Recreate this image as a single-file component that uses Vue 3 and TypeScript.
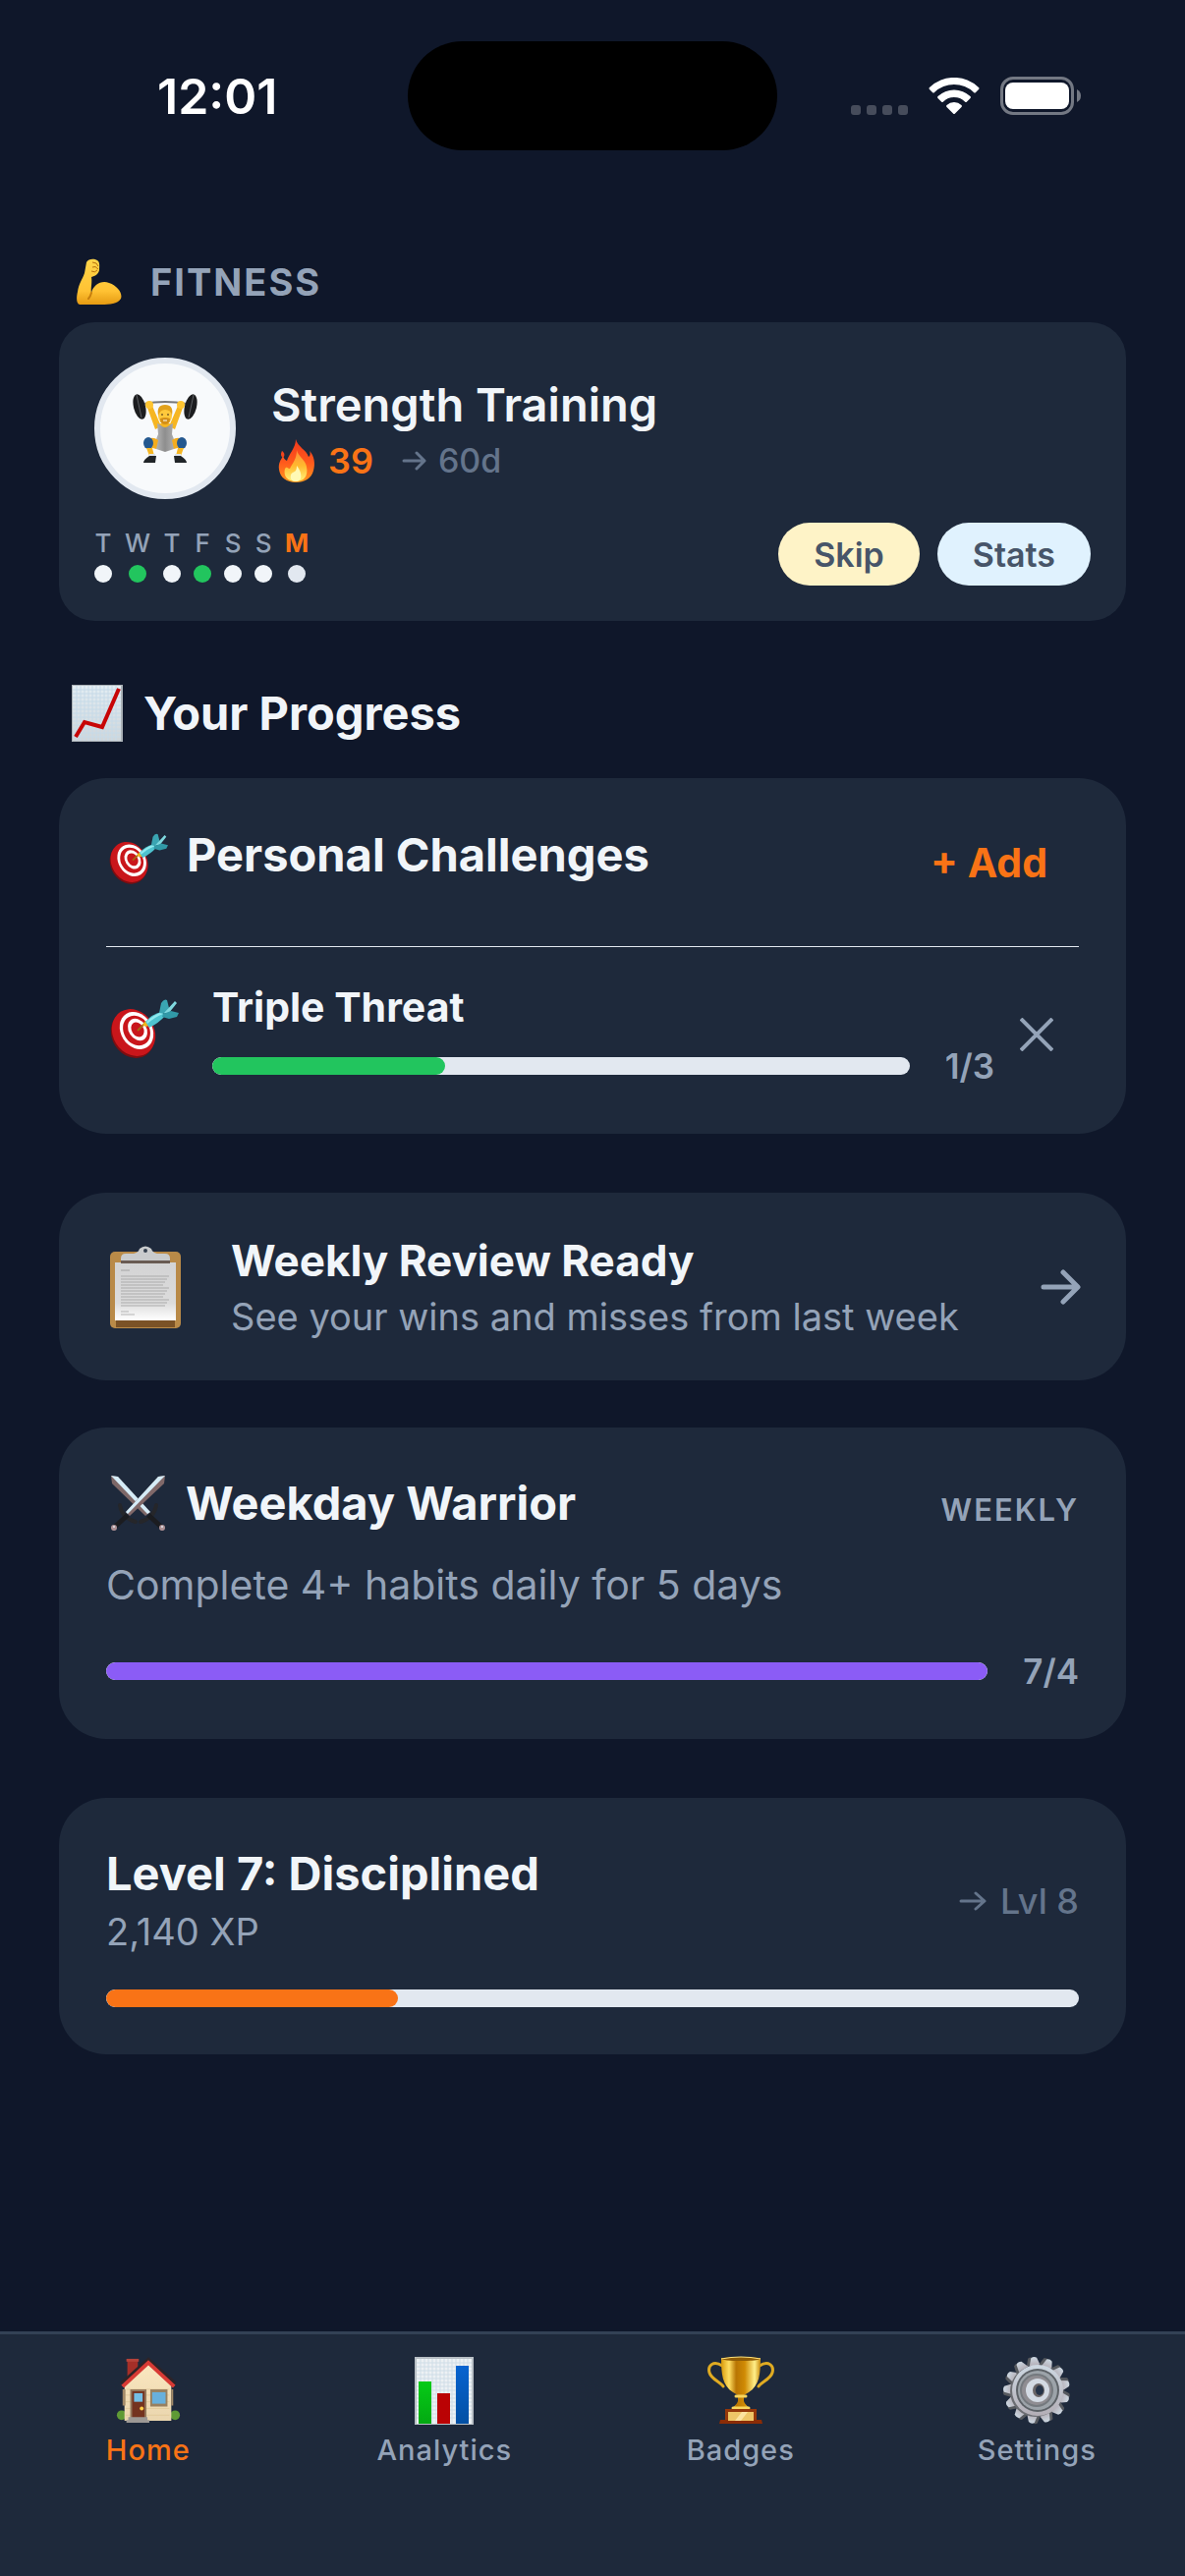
<script setup lang="ts">
interface Day {
  label: string
  tone: 'idle' | 'done' | 'today'
}

interface Tab {
  label: string
  icon: string
  active: boolean
}

const days: Day[] = [
  { label: 'T', tone: 'idle' },
  { label: 'W', tone: 'done' },
  { label: 'T', tone: 'idle' },
  { label: 'F', tone: 'done' },
  { label: 'S', tone: 'idle' },
  { label: 'S', tone: 'idle' },
  { label: 'M', tone: 'today' },
]

const tabs: Tab[] = [
  { label: 'Home', icon: 'house', active: true },
  { label: 'Analytics', icon: 'bars', active: false },
  { label: 'Badges', icon: 'trophy', active: false },
  { label: 'Settings', icon: 'gear', active: false },
]

const challenge = { title: 'Triple Threat', done: 1, goal: 3 }
const weekly = { done: 7, goal: 4 }
const levelPercent = 30

function percent(done: number, goal: number): number {
  return Math.min(100, (done / goal) * 100)
}

const teeth = Array.from({ length: 13 }, (_, i) => Math.round((i * 360) / 13) - 5)
const letterLines = Array.from({ length: 11 }, (_, i) => 31 + i * 3)
</script>

<template>
  <div class="page">
    <svg class="sprite" aria-hidden="true">
      <defs>
        <linearGradient id="skin" x1="0" y1="0" x2="0" y2="1">
          <stop offset="0" stop-color="#ffd54a" />
          <stop offset="0.7" stop-color="#ffc233" />
          <stop offset="1" stop-color="#e59a12" />
        </linearGradient>
        <linearGradient id="flame" x1="0" y1="0" x2="0" y2="1">
          <stop offset="0" stop-color="#f2381c" />
          <stop offset="0.55" stop-color="#ff5a1c" />
          <stop offset="1" stop-color="#ff9a1e" />
        </linearGradient>
        <linearGradient id="flame-core" x1="0" y1="0" x2="0" y2="1">
          <stop offset="0" stop-color="#ff8c3a" />
          <stop offset="0.5" stop-color="#ffb92e" />
          <stop offset="1" stop-color="#fff27a" />
        </linearGradient>
        <linearGradient id="paper" x1="0" y1="0" x2="0" y2="1">
          <stop offset="0" stop-color="#e3edf3" />
          <stop offset="1" stop-color="#cfd6da" />
        </linearGradient>
        <linearGradient id="sheet" x1="0" y1="0" x2="0" y2="1">
          <stop offset="0" stop-color="#d3d3d4" />
          <stop offset="0.7" stop-color="#dcdcdc" />
          <stop offset="1" stop-color="#ffffff" />
        </linearGradient>
        <linearGradient id="wall" x1="0" y1="0" x2="0" y2="1">
          <stop offset="0" stop-color="#fbe8c0" />
          <stop offset="1" stop-color="#ead5ae" />
        </linearGradient>
        <linearGradient id="gold" x1="0" y1="0" x2="1" y2="0">
          <stop offset="0" stop-color="#d99a0b" />
          <stop offset="0.2" stop-color="#ffdf62" />
          <stop offset="0.38" stop-color="#b87503" />
          <stop offset="0.6" stop-color="#d08b04" />
          <stop offset="0.85" stop-color="#fff08a" />
          <stop offset="1" stop-color="#c98a0a" />
        </linearGradient>
        <linearGradient id="steel" x1="0" y1="0" x2="0" y2="1">
          <stop offset="0" stop-color="#cdd8e2" />
          <stop offset="1" stop-color="#b3aeb6" />
        </linearGradient>
        <linearGradient id="suit" x1="0" y1="0" x2="1" y2="0">
          <stop offset="0" stop-color="#b5b5b5" />
          <stop offset="0.5" stop-color="#8e8e8e" />
          <stop offset="1" stop-color="#b0b0b0" />
        </linearGradient>
        <linearGradient id="green-bar" x1="0" y1="0" x2="0" y2="1">
          <stop offset="0" stop-color="#06cb17" />
          <stop offset="1" stop-color="#03a912" />
        </linearGradient>
        <linearGradient id="blue-bar" x1="0" y1="0" x2="0" y2="1">
          <stop offset="0" stop-color="#0763d0" />
          <stop offset="1" stop-color="#0350a4" />
        </linearGradient>
      </defs>

      <symbol id="target" viewBox="0 0 70 60">
        <ellipse cx="23" cy="36" rx="21" ry="25" transform="rotate(-32 23 36)" fill="#7d0d10" />
        <ellipse cx="24" cy="34" rx="21" ry="25" transform="rotate(-32 24 34)" fill="#c9161b" />
        <ellipse cx="27" cy="32" rx="16" ry="20" transform="rotate(-32 27 32)" fill="#fff" />
        <ellipse cx="27" cy="32" rx="13" ry="16" transform="rotate(-32 27 32)" fill="#c9161b" />
        <ellipse cx="28" cy="31" rx="9" ry="12" transform="rotate(-32 28 31)" fill="#fff" />
        <ellipse cx="28" cy="31" rx="6" ry="8" transform="rotate(-32 28 31)" fill="#c9161b" />
        <path d="M28 32 L36 24" stroke="#a76a12" stroke-width="2" />
        <path d="M33 26 L36 22 L40 27 L36 28 Z" fill="#f0b51d" />
        <path d="M36 23 Q43 15 52 13 L56 17 Q50 24 40 29 Z" fill="#4fc3cf" />
        <path d="M37 23 Q44 16 53 13 L54 15 Q46 18 38 25 Z" fill="#8fe9ee" />
        <path d="M50 14 L52 4 Q55 -1 58 1 L60 9 L56 15 Z" fill="#3aa5b2" />
        <path d="M55 14 L66 2 L68 4 L60 14 Z" fill="#7fd8df" />
        <path d="M54 15 L62 12 L70 14 L68 18 L60 20 L53 18 Z" fill="#3199a7" />
      </symbol>

      <symbol id="house" viewBox="-2 -2 70 72">
        <circle cx="5" cy="60" r="5" fill="#5f9a35" />
        <circle cx="61" cy="60" r="5" fill="#5f9a35" />
        <path d="M11 3 H22 V18 L11 26 Z" fill="#a52f28" />
        <path d="M10 1 H23 V4 H10 Z" fill="#b64239" />
        <path d="M8 27 L33 5 L57 27 V66 H8 Z" fill="url(#wall)" />
        <path d="M10 33 H55 M9 39 H55 M9 46 H55 M9 53 H55 M9 60 H55" stroke="#e3cb9d" stroke-width="1" />
        <path d="M6 33 H9 V50 H6 Z M57 33 H59 V50 H57 Z" fill="#a38a68" />
        <path d="M5 27 L33 2 L61 27" fill="none" stroke="#2e2327" stroke-width="4" />
        <path d="M6 30 L33 5 L60 30" fill="none" stroke="#d83a34" stroke-width="4" />
        <path d="M14 33 H31 V63 H14 Z" fill="#94785c" />
        <path d="M16 35 H29 V63 H16 Z" fill="#74331f" />
        <path d="M18 37 H27 V46 H18 Z" fill="#74bfe5" />
        <circle cx="26" cy="53" r="2" fill="#ffce4a" />
        <path d="M35 33 H53 V51 H35 Z" fill="#98805f" />
        <path d="M37 36 H51 V48 H37 Z" fill="#68b0dc" />
        <path d="M12 62 H32 V65 H34 V68 H10 V65 H12 Z" fill="#9d9995" />
      </symbol>

      <symbol id="bars" viewBox="0 0 66 70">
        <path d="M3 1 H63 V70 H3 Z" fill="#b8bfc5" />
        <path d="M5 3 H61 V69 H5 Z" fill="#edf1f4" />
        <path
          d="M9 3 V69 M13 3 V69 M17 3 V69 M21 3 V69 M25 3 V69 M29 3 V69 M33 3 V69 M37 3 V69 M41 3 V69 M45 3 V69 M49 3 V69 M53 3 V69 M57 3 V69 M5 7 H61 M5 11 H61 M5 15 H61 M5 19 H61 M5 23 H61 M5 27 H61 M5 31 H61 M5 35 H61 M5 39 H61 M5 43 H61 M5 47 H61 M5 51 H61 M5 55 H61 M5 59 H61 M5 63 H61"
          stroke="#cfdde7"
          stroke-width="1"
        />
        <path d="M7 26 H20 V69 H7 Z" fill="url(#green-bar)" />
        <path d="M26 38 H39 V69 H26 Z" fill="#ba0204" />
        <path d="M45 10 H58 V69 H45 Z" fill="url(#blue-bar)" />
      </symbol>

      <symbol id="trophy" viewBox="0 0 68 70">
        <path
          d="M15 10 C6 4 0 10 2 17 C4 24 13 26 16 31 M53 10 C62 4 68 10 66 17 C64 24 55 26 52 31"
          fill="none"
          stroke="#e0ab22"
          stroke-width="3"
          stroke-linecap="round"
        />
        <path d="M14 2 H54 C54 18 53 30 42 37 L37 40 V46 C38 50 42 51 43 55 H25 C26 51 30 50 31 46 V40 L26 37 C15 30 14 18 14 2 Z" fill="url(#gold)" />
        <path d="M29 41 H39 M26 53 H42" stroke="#f8d65c" stroke-width="3" stroke-linecap="round" />
        <ellipse cx="34" cy="3" rx="20" ry="2" fill="#8f5c05" />
        <path d="M14 3 Q34 -1 54 3" fill="none" stroke="#ffe37c" stroke-width="1" />
        <path d="M18 54 H50 V65 H18 Z" fill="#96380a" />
        <path d="M13 65 H55 L56 69 H12 Z" fill="#8b2c06" />
        <path d="M21 57 H47 V66 H21 Z" fill="#eec667" />
        <path d="M28 66 L35 57 H41 L34 66 Z" fill="#fbe3a0" />
      </symbol>

      <symbol id="gear" viewBox="0 0 70 70">
        <g v-for="angle in teeth" :key="angle" :transform="`rotate(${angle} 35 35)`">
          <path d="M29 9 L31 1 Q34 -1 36 1 L39 9 Z" fill="#575a5f" transform="translate(-2 1)" />
          <path d="M30 10 L32 2 Q35 0 38 2 L41 10 Z" fill="url(#steel)" />
        </g>
        <circle cx="34" cy="36" r="26" fill="#6b6d72" />
        <circle cx="36" cy="35" r="26" fill="url(#steel)" />
        <circle cx="36" cy="35" r="22" fill="#5d6267" />
        <circle cx="36" cy="35" r="20" fill="#9ca3a9" />
        <circle cx="35" cy="35" r="17" fill="#74797e" />
        <circle cx="35" cy="35" r="15" fill="#8f8d92" />
        <circle cx="36" cy="35" r="12" fill="#d3dae3" />
        <ellipse cx="37" cy="35" rx="6" ry="7" fill="#6a6566" />
        <ellipse cx="38" cy="35" rx="4" ry="5" fill="#263448" />
      </symbol>
    </svg>

    <header class="status">
      <time class="clock">12:01</time>
      <div class="island"></div>
      <div class="signals">
        <svg width="58" height="38" viewBox="0 0 58 38" aria-label="No signal" role="img">
          <g fill="#464c5b">
            <rect x="0" y="28" width="10" height="10" rx="3" />
            <rect x="16" y="28" width="10" height="10" rx="3" />
            <rect x="32" y="28" width="10" height="10" rx="3" />
            <rect x="48" y="28" width="10" height="10" rx="3" />
          </g>
        </svg>
        <svg width="52" height="38" viewBox="0 0 52 38" aria-label="Wi-Fi" role="img">
          <g fill="#fff">
            <path d="M1 10 A36 36 0 0 1 51 10 Q52 11 51 12 L48 15 Q47 16 46 15 A29 29 0 0 0 6 15 Q5 16 4 15 L1 12 Q0 11 1 10 Z" />
            <path d="M9.500 19 A24 24 0 0 1 42.500 19 Q43.500 20 42.500 21 L39 24.500 Q38 25.500 37 24.500 A16 16 0 0 0 15 24.500 Q14 25.500 13 24.500 L9.500 21 Q8.500 20 9.500 19 Z" />
            <path d="M18.500 28 A11 11 0 0 1 33.500 28 Q34.500 29 33.500 30 L27 36.500 Q26 37.500 25 36.500 L18.500 30 Q17.500 29 18.500 28 Z" />
          </g>
        </svg>
        <svg width="82" height="40" viewBox="0 0 82 40" aria-label="Battery full" role="img">
          <rect x="1.500" y="1.500" width="72" height="36" rx="11.500" fill="none" stroke="#737883" stroke-width="3" />
          <rect x="5" y="6" width="65" height="27" rx="8" fill="#fff" />
          <path d="M78 13 Q82 15 82 19.500 Q82 24 78 26 Z" fill="#737883" />
        </svg>
      </div>
    </header>

    <main class="content">
      <section>
        <h2 class="category">
          <svg width="46" height="48" viewBox="0 0 46 48" aria-hidden="true">
            <path
              d="M10 4 C12 0 18 0 21 2 C24 4 23 8 23 12 C22 16 19 18 15 19 C16 25 14 31 15 35 C17 27 25 22 33 25 C42 28 47 36 45 41 C41 48 28 47 19 47 H3 C-1 46 0 38 1 34 C2 26 6 21 8 15 Z"
              fill="url(#skin)"
            />
            <path d="M16 4 Q21 4 22 8 M16 9 Q19 7 22 11 M15 13 Q19 15 21 12" fill="none" stroke="#b66f0c" stroke-width="1" />
            <path d="M15 35 C14 39 13 40 12 41" fill="none" stroke="#c67e0d" stroke-width="2" stroke-linecap="round" />
          </svg>
          <span>FITNESS</span>
        </h2>

        <article class="card habit">
          <div class="habit-top">
            <div class="avatar">
              <svg width="68" height="72" viewBox="0 0 68 72" aria-hidden="true">
                <path d="M12 11 Q34 7 56 11" fill="none" stroke="#77787a" stroke-width="2" />
                <path d="M16 15 L21 13 L30 34 L24 37 Z M52 15 L47 13 L38 34 L44 37 Z" fill="#f6b622" />
                <path d="M26 31 Q34 35 42 31 L41 42 Q45 50 43 57 L34 60 L25 57 Q23 50 27 42 Z" fill="url(#suit)" />
                <path d="M28 31 Q34 39 40 31 Z" fill="#f6b622" />
                <path d="M14 49 Q20 43 27 48 L25 57 L14 54 Z M54 49 Q48 43 41 48 L43 57 L54 54 Z" fill="#f3ac1e" />
                <ellipse cx="17" cy="51" rx="5" ry="6" fill="#24588f" />
                <ellipse cx="51" cy="51" rx="5" ry="6" fill="#24588f" />
                <path d="M15 56 H21 L23 64 H18 Z M53 56 H47 L45 64 H50 Z" fill="#f6b622" />
                <path d="M18 62 H24 V65 H18 Z M44 62 H50 V65 H44 Z" fill="#dfe5ea" />
                <path d="M18 64 H25 L24 71 H12 Q12 68 18 64 Z M50 64 H43 L44 71 H56 Q56 68 50 64 Z" fill="#202428" />
                <ellipse cx="34" cy="23" rx="7" ry="9" fill="#ffc93c" />
                <path d="M27 23 Q25 12 34 12 Q43 12 41 23 Q40 17 34 17 Q29 17 27 23 Z" fill="#e2a21c" />
                <path d="M29 26 Q34 24 39 26 Q39 32 34 32 Q29 32 29 26 Z" fill="#d48f17" />
                <path d="M31 21 V23 M37 21 V23" stroke="#3a2a18" stroke-width="1" />
                <path d="M32 28 H36" stroke="#fff" stroke-width="1" />
                <ellipse cx="8" cy="14" rx="6" ry="13" transform="rotate(-14 8 14)" fill="#1c1d1f" />
                <ellipse cx="60" cy="14" rx="6" ry="13" transform="rotate(14 60 14)" fill="#1c1d1f" />
                <path d="M5 2 L10 25 M63 2 L58 25" stroke="#5d5f63" stroke-width="1" />
                <circle cx="18" cy="12" r="4" fill="#ffc531" />
                <circle cx="50" cy="12" r="4" fill="#ffc531" />
              </svg>
            </div>
            <div class="habit-text">
              <h3 class="habit-title">Strength Training</h3>
              <p class="streak">
                <svg width="50" height="44" viewBox="0 0 50 44" aria-hidden="true">
                  <path
                    d="M25 0 C27 8 36 11 38 18 C40 17 40 14 39 12 C44 17 45 25 43 32 C41 40 34 44 25 44 C16 44 9 39 8 31 C7 24 10 21 12 17 C13 20 14 21 16 22 C18 15 25 9 25 0 Z"
                    fill="url(#flame)"
                  />
                  <path d="M11 12 C14 14 14 17 12 19 C9 17 10 14 11 12 Z" fill="#f2451d" />
                  <path d="M26 11 C27 17 35 21 36 28 C38 38 33 43 25 43 C17 43 12 38 14 30 C16 27 17 30 19 30 C22 24 26 20 26 11 Z" fill="url(#flame-core)" />
                  <path d="M26 27 C31 33 33 43 25 43 C18 43 19 35 22 34 C25 33 26 31 26 27 Z" fill="#fffab5" />
                </svg>
                <strong class="streak-count">39</strong>
                <span class="streak-goal">
                  <svg width="25" height="20" viewBox="0 0 25 20" aria-hidden="true">
                    <path d="M2 10 H22 M15 2 L23 10 L15 18" fill="none" stroke="currentColor" stroke-width="3" stroke-linecap="round" stroke-linejoin="round" />
                  </svg>
                  60d
                </span>
              </p>
            </div>
          </div>

          <div class="habit-bottom">
            <ul class="week">
              <li v-for="(day, i) in days" :key="i" class="day" :class="day.tone">
                <span>{{ day.label }}</span>
                <i class="dot"></i>
              </li>
            </ul>
            <div class="actions">
              <button type="button" class="pill skip">Skip</button>
              <button type="button" class="pill stats">Stats</button>
            </div>
          </div>
        </article>
      </section>

      <section>
        <h2 class="heading">
          <svg width="54" height="58" viewBox="0 0 54 58" aria-hidden="true">
            <rect x="1" y="0" width="52" height="58" fill="#aab1b6" />
            <rect x="2" y="1" width="49" height="56" fill="url(#paper)" />
            <path
              d="M6 1 V57 M10 1 V57 M14 1 V57 M18 1 V57 M22 1 V57 M26 1 V57 M30 1 V57 M34 1 V57 M38 1 V57 M42 1 V57 M46 1 V57 M2 5 H51 M2 9 H51 M2 13 H51 M2 17 H51 M2 21 H51 M2 25 H51 M2 29 H51 M2 33 H51 M2 37 H51 M2 41 H51 M2 45 H51 M2 49 H51 M2 53 H51"
              stroke="#c6dae8"
              stroke-width="1"
            />
            <path d="M5 53 L14 38 L32 43 L49 4" fill="none" stroke="#c70506" stroke-width="4" />
          </svg>
          <span>Your Progress</span>
        </h2>

        <article class="card roomy">
          <div class="card-head">
            <h3 class="title">
              <svg class="title-target" width="60" height="52" aria-hidden="true"><use href="#target" /></svg>
              <span>Personal Challenges</span>
            </h3>
            <button type="button" class="add">+ Add</button>
          </div>
          <div class="challenge">
            <svg class="challenge-icon" width="70" height="60" aria-hidden="true"><use href="#target" /></svg>
            <div class="challenge-body">
              <h4 class="challenge-title">{{ challenge.title }}</h4>
              <div class="meter-row">
                <div class="meter" role="progressbar" aria-label="Triple Threat" :aria-valuenow="challenge.done" :aria-valuemax="challenge.goal">
                  <div class="fill green" :style="{ width: percent(challenge.done, challenge.goal) + '%' }"></div>
                </div>
                <span class="count">{{ challenge.done }}/{{ challenge.goal }}</span>
              </div>
            </div>
            <button type="button" class="dismiss" aria-label="Remove challenge">
              <svg width="34" height="34" viewBox="0 0 34 34" aria-hidden="true">
                <path d="M1 1 L33 33 M33 1 L1 33" stroke="currentColor" stroke-width="4" />
              </svg>
            </button>
          </div>
        </article>

        <a class="card review" href="#review">
          <svg width="80" height="84" viewBox="0 0 80 84" aria-hidden="true">
            <rect x="4" y="6" width="72" height="78" rx="5" fill="#b98a48" />
            <path d="M10 74 H70 V83 H10 Z" fill="#7b5226" />
            <path d="M9 17 H71 V76 H9 Z" fill="url(#sheet)" />
            <path d="M15 25 H24" stroke="#a4a4a4" stroke-width="1" />
            <path v-for="y in letterLines" :key="y" :d="`M15 ${y} H${58 + (y % 4) * 2}`" stroke="#ababab" stroke-width="1" />
            <path d="M15 67 H23 M15 70 H29" stroke="#b5b5b5" stroke-width="1" />
            <path d="M15 13 Q15 8 20 8 H28 Q33 7 34 3 Q40 -2 46 3 Q47 7 52 8 H60 Q65 8 65 13 V18 H15 Z" fill="#c9cbcd" />
            <path d="M15 15 H65 V18 H15 Z" fill="#695b53" />
            <circle cx="40" cy="5" r="2" fill="#34404f" />
          </svg>
          <span class="review-text">
            <strong class="review-title">Weekly Review Ready</strong>
            <span class="review-sub">See your wins and misses from last week</span>
          </span>
          <svg width="41" height="36" viewBox="0 0 41 36" aria-hidden="true">
            <path d="M3 18 H36 M23 3 L38 18 L23 33" fill="none" stroke="#94a3b8" stroke-width="5" stroke-linecap="round" stroke-linejoin="round" />
          </svg>
        </a>

        <article class="card roomy weekly">
          <div class="weekly-head">
            <h3 class="title">
              <svg width="62" height="58" viewBox="0 0 62 58" aria-hidden="true">
                <path d="M5 1 L12 2 L45 38 L40 42 L6 9 Z" fill="#7d6767" />
                <path d="M5 1 L12 2 L45 38 L42 40 Z" fill="#d5ecf7" />
                <path d="M60 1 L53 2 L20 38 L24 42 L59 9 Z" fill="#806869" />
                <path d="M60 1 L53 2 L20 38 L22 40 L57 4 Z" fill="#d5ecf7" />
                <path d="M14 31 Q16 44 30 48 M51 31 Q49 44 35 48" fill="none" stroke="#25262a" stroke-width="4" stroke-linecap="round" />
                <path d="M22 41 L9 53 M43 41 L56 53" stroke="#1b1c20" stroke-width="5" />
                <circle cx="8" cy="54" r="3" fill="#ad9195" />
                <circle cx="57" cy="54" r="3" fill="#ad9195" />
                <circle cx="8" cy="53" r="1" fill="#e3e7ee" />
                <circle cx="57" cy="53" r="1" fill="#e3e7ee" />
              </svg>
              <span>Weekday Warrior</span>
            </h3>
            <span class="tag">WEEKLY</span>
          </div>
          <p class="weekly-sub">Complete 4+ habits daily for 5 days</p>
          <div class="meter-row">
            <div class="meter" role="progressbar" aria-label="Weekday Warrior" :aria-valuenow="weekly.done" :aria-valuemax="weekly.goal">
              <div class="fill purple" :style="{ width: percent(weekly.done, weekly.goal) + '%' }"></div>
            </div>
            <span class="count">{{ weekly.done }}/{{ weekly.goal }}</span>
          </div>
        </article>

        <article class="card roomy level">
          <div class="level-head">
            <div>
              <h3 class="title">Level 7: Disciplined</h3>
              <p class="xp">2,140 XP</p>
            </div>
            <span class="next">
              <svg width="28" height="22" viewBox="0 0 28 22" aria-hidden="true">
                <path d="M2 11 H25 M17 3 L26 11 L17 19" fill="none" stroke="currentColor" stroke-width="3" stroke-linecap="round" stroke-linejoin="round" />
              </svg>
              Lvl 8
            </span>
          </div>
          <div class="meter" role="progressbar" aria-label="Level progress" :aria-valuenow="levelPercent" aria-valuemax="100">
            <div class="fill orange" :style="{ width: levelPercent + '%' }"></div>
          </div>
        </article>
      </section>
    </main>

    <nav class="tabs">
      <a v-for="tab in tabs" :key="tab.label" class="tab" :class="{ active: tab.active }" :href="'#' + tab.label.toLowerCase()">
        <svg width="70" height="70" aria-hidden="true"><use :href="'#' + tab.icon" /></svg>
        <span>{{ tab.label }}</span>
      </a>
    </nav>
  </div>
</template>

<style>
body {
  margin: 0;
  background: #0f172a;
}
</style>

<style scoped>
.page {
  display: flex;
  flex-direction: column;
  min-height: 100vh;
  background: #0f172a;
  color: #f1f5f9;
  font-family: Inter, "Liberation Sans", sans-serif;
}

.sprite {
  position: absolute;
  width: 0;
  height: 0;
}

svg {
  display: block;
  flex: none;
}

h2,
h3,
h4,
p,
ul {
  margin: 0;
  padding: 0;
}

button {
  border: 0;
  font-family: inherit;
  cursor: pointer;
}

a {
  color: inherit;
  text-decoration: none;
}

/* Status bar */
.status {
  display: grid;
  grid-template-columns: 1fr 376px 1fr;
  align-items: center;
  padding-top: 42px;
}

.clock {
  padding-left: 160px;
  color: #fff;
  font-size: 50px;
  font-weight: 600;
  line-height: 60px;
}

.island {
  height: 111px;
  border-radius: 56px;
  background: #000;
}

.signals {
  display: flex;
  justify-content: flex-end;
  align-items: center;
  gap: 21px;
  padding-right: 106px;
}

/* Content */
.content {
  padding: 110px 60px 60px;
}

.category {
  display: flex;
  align-items: center;
  gap: 29px;
  padding: 0 18px 17px;
  color: #94a3b8;
  font-size: 38px;
  font-weight: 700;
  line-height: 48px;
  letter-spacing: 2px;
}

.heading {
  display: flex;
  align-items: center;
  gap: 20px;
  padding: 65px 12px 37px;
  font-size: 47px;
  font-weight: 700;
  line-height: 58px;
}

.card {
  border-radius: 48px;
  background: #1e293b;
}

.habit {
  padding: 36px;
  border-radius: 36px;
}

.roomy {
  padding: 48px;
}

.habit-top {
  display: flex;
  gap: 36px;
}

.avatar {
  display: flex;
  align-items: center;
  justify-content: center;
  box-sizing: border-box;
  width: 144px;
  height: 144px;
  border: 6px solid #e2e8f0;
  border-radius: 50%;
  background: #f8fafc;
}

.habit-text {
  padding-top: 20px;
}

.habit-title {
  font-size: 47px;
  font-weight: 600;
  line-height: 56px;
}

.streak {
  display: flex;
  align-items: center;
  gap: 8px;
  margin-top: 5px;
  line-height: 48px;
}

.streak-count {
  color: #f97316;
  font-size: 36px;
  font-weight: 600;
}

.streak-goal {
  display: flex;
  align-items: center;
  gap: 12px;
  margin-left: 21px;
  color: #64748b;
  font-size: 34px;
  font-weight: 500;
}

.habit-bottom {
  display: flex;
  align-items: center;
  justify-content: space-between;
  margin-top: 24px;
}

.week {
  display: flex;
  gap: 13px;
  list-style: none;
}

.day {
  display: flex;
  flex-direction: column;
  align-items: center;
  gap: 6px;
  color: #94a3b8;
  font-size: 26px;
  font-weight: 500;
  line-height: 33px;
}

.day.today {
  color: #f97316;
  font-weight: 700;
}

.dot {
  width: 18px;
  height: 18px;
  border-radius: 50%;
  background: #f1f5f9;
}

.done .dot {
  background: #22c55e;
}

.today .dot {
  background: #e2e8f0;
}

.actions {
  display: flex;
  gap: 18px;
}

.pill {
  height: 64px;
  padding: 0 36px;
  border-radius: 32px;
  color: #475569;
  font-size: 34px;
  font-weight: 600;
}

.skip {
  background: #fef3c7;
}

.stats {
  background: #e0f2fe;
}

.title {
  display: flex;
  align-items: center;
  gap: 19px;
  font-size: 47px;
  font-weight: 700;
  line-height: 58px;
}

.title-target {
  padding: 8px 0 0 3px;
}

.card-head {
  display: flex;
  align-items: flex-start;
  justify-content: space-between;
  padding-bottom: 48px;
  border-bottom: 1px solid #e2e8f0;
}

.add {
  height: 75px;
  padding: 0 32px;
  background: transparent;
  color: #f97316;
  font-size: 41px;
  font-weight: 700;
}

.challenge {
  display: flex;
  align-items: center;
  padding-top: 36px;
}

.challenge-icon {
  padding: 0 34px 12px 4px;
}

.challenge-body {
  flex: 1;
}

.challenge-title {
  margin-bottom: 14px;
  font-size: 41px;
  font-weight: 700;
  line-height: 50px;
}

.meter-row {
  display: flex;
  align-items: center;
  gap: 36px;
}

.meter {
  flex: 1;
  height: 18px;
  border-radius: 9px;
  overflow: hidden;
  background: #e2e8f0;
}

.fill {
  height: 100%;
  border-radius: 9px;
}

.green {
  background: #22c55e;
}

.purple {
  background: #8b5cf6;
}

.orange {
  background: #f97316;
}

.count {
  color: #94a3b8;
  font-size: 35px;
  font-weight: 600;
  line-height: 42px;
}

.dismiss {
  padding: 26px;
  background: transparent;
  color: #94a3b8;
}

.review {
  display: flex;
  align-items: center;
  margin-top: 60px;
  padding: 41px 46px 41px 48px;
}

.review-text {
  display: flex;
  flex: 1;
  flex-direction: column;
  gap: 9px;
  padding: 4px 0 0 47px;
  line-height: 48px;
}

.review-title {
  font-size: 44px;
  font-weight: 700;
}

.review-sub {
  color: #94a3b8;
  font-size: 38px;
}

.weekly {
  margin-top: 48px;
}

.weekly-head {
  display: flex;
  align-items: flex-end;
  justify-content: space-between;
}

.tag {
  color: #94a3b8;
  font-size: 31px;
  font-weight: 600;
  line-height: 45px;
  letter-spacing: 2px;
}

.weekly-sub {
  padding: 28px 0 41px;
  color: #94a3b8;
  font-size: 41px;
  line-height: 52px;
}

.level {
  margin-top: 60px;
}

.level-head {
  display: flex;
  align-items: center;
  justify-content: space-between;
  margin-bottom: 34px;
}

.xp {
  margin-top: 5px;
  color: #94a3b8;
  font-size: 38px;
  line-height: 50px;
}

.next {
  display: flex;
  align-items: center;
  gap: 14px;
  color: #64748b;
  font-size: 36px;
  font-weight: 500;
}

/* Tab bar */
.tabs {
  display: flex;
  margin-top: auto;
  padding: 22px 0 110px;
  border-top: 3px solid #334155;
  background: #1e293b;
}

.tab {
  display: flex;
  flex: 1;
  flex-direction: column;
  align-items: center;
  gap: 8px;
  color: #94a3b8;
  font-size: 29px;
  font-weight: 500;
  line-height: 36px;
  letter-spacing: 1px;
}

.tab.active {
  color: #f97316;
}
</style>
